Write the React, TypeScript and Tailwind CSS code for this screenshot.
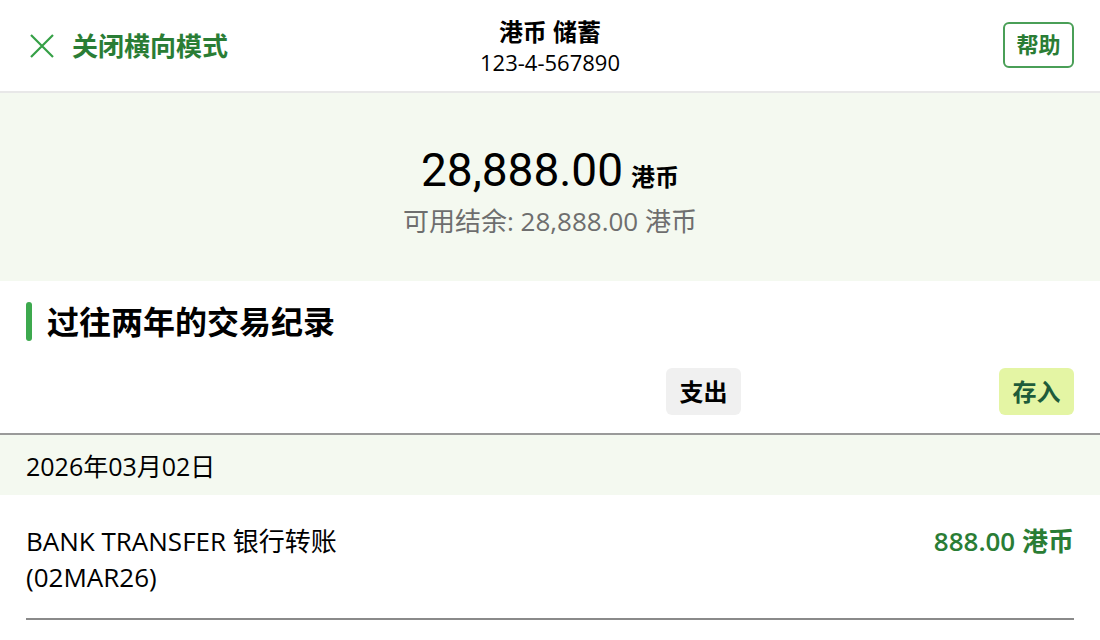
import React from "react";

const F = { fontFamily: '"Open Sans", "Noto Sans CJK SC", sans-serif' };
const R = { fontFamily: 'Roboto, "Noto Sans CJK SC", sans-serif' };

export default function App() {
  return (
    <div className="w-[1100px] h-[640px] bg-white text-black overflow-hidden" style={F}>
      {/* header */}
      <div className="h-[93px] flex items-center justify-between px-[26px] border-b-2 border-[#e8e8e8]">
        <div className="flex items-center gap-[15px] w-[300px] pt-[1px]">
          <svg width="30" height="30" viewBox="0 0 30 30" className="ml-[1px]">
            <path d="M4 4 L26 26 M26 4 L4 26" stroke="#35a046" strokeWidth="2.2" fill="none" />
          </svg>
          <span className="text-[26px] font-bold text-[#2a7d35] leading-none">关闭横向模式</span>
        </div>
        <div className="flex flex-col items-center pt-[3px]">
          <span className="text-[24px] font-bold leading-[30px]">港币 储蓄</span>
          <span className="text-[22px] leading-[30px]">123-4-567890</span>
        </div>
        <div className="w-[300px] flex justify-end">
          <div className="w-[71px] h-[46px] border-2 border-[#4a9f57] rounded-[6px] flex items-center justify-center text-[22px] font-bold text-[#2a7d35] mb-[2px]">
            帮助
          </div>
        </div>
      </div>

      {/* balance */}
      <div className="h-[188px] bg-[#f4f9f0] flex flex-col items-center pt-[48px]">
        <div className="flex items-baseline gap-[8px]">
          <span className="text-[46px] leading-[58px]" style={R}>28,888.00</span>
          <span className="text-[24px] font-bold">港币</span>
        </div>
        <div className="text-[26px] leading-[36px] text-[#6e6e6e] mt-[4px]">可用结余: 28,888.00 港币</div>
      </div>

      {/* section title */}
      <div className="px-[26px] pt-[21px] flex items-center gap-[15px] h-[60px]">
        <div className="w-[6px] h-[39px] rounded-full bg-[#3da94e]" />
        <span className="text-[32px] font-bold leading-[40px]">过往两年的交易纪录</span>
      </div>

      {/* filters */}
      <div className="flex justify-end px-[26px] pt-[27px] pb-[18px] gap-[258px]">
        <div className="w-[75px] h-[47px] rounded-[6px] bg-[#f0f0f0] flex items-center justify-center text-[24px] font-bold">支出</div>
        <div className="w-[75px] h-[47px] rounded-[6px] bg-[#e4f5a4] flex items-center justify-center text-[24px] font-bold text-[#1e5c3a]">存入</div>
      </div>
      <div className="h-[2px] bg-[#9a9a9a]" />

      {/* date row */}
      <div className="h-[60px] bg-[#f4f9f0] flex items-center px-[26px] text-[25px] pt-[3px]">2026年03月02日</div>

      {/* transaction */}
      <div className="px-[26px]">
        <div className="flex justify-between pt-[28px] pb-[23px] border-b-2 border-[#8a8a8a]">
          <div className="text-[26px] leading-[36px]">
            <div>BANK TRANSFER 银行转账</div>
            <div>(02MAR26)</div>
          </div>
          <div className="text-[26px] leading-[36px] font-semibold text-[#2a7d35]">888.00 港币</div>
        </div>
      </div>
    </div>
  );
}
